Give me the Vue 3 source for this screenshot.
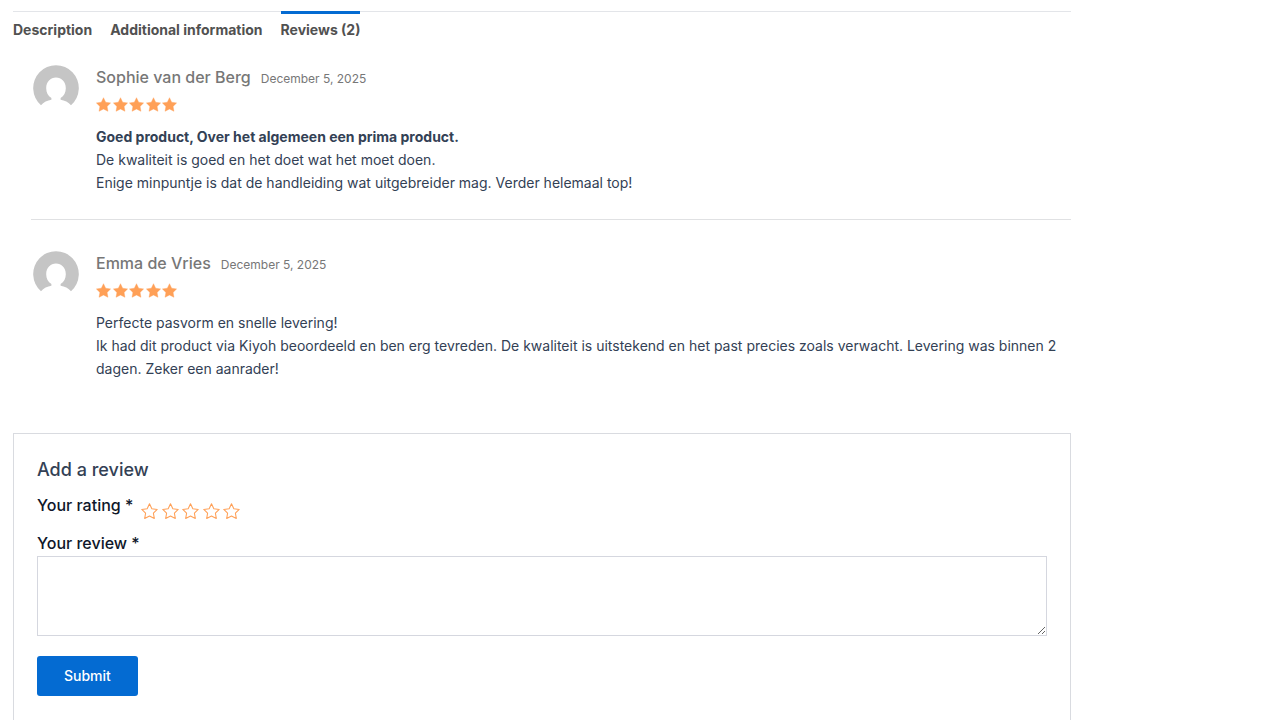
<script setup>
import { ref } from 'vue'

const tabs = [
  { id: 'description', label: 'Description' },
  { id: 'additional', label: 'Additional information' },
  { id: 'reviews', label: 'Reviews (2)' },
]
const activeTab = ref('reviews')
const rating = ref(0)
const comment = ref('')

const starPath =
  'M12 1.100L15.300 8L22.900 9.050L17.500 14.400L18.800 21.900L12 18.400L5.200 21.900L6.500 14.400L1.100 9.050L8.700 8Z'

const reviews = [
  {
    author: 'Sophie van der Berg',
    date: 'December 5, 2025',
    title: 'Goed product, Over het algemeen een prima product.',
    lines: [
      'De kwaliteit is goed en het doet wat het moet doen.',
      'Enige minpuntje is dat de handleiding wat uitgebreider mag. Verder helemaal top!',
    ],
  },
  {
    author: 'Emma de Vries',
    date: 'December 5, 2025',
    title: '',
    lines: [
      'Perfecte pasvorm en snelle levering!',
      'Ik had dit product via Kiyoh beoordeeld en ben erg tevreden. De kwaliteit is uitstekend en het past precies zoals verwacht. Levering was binnen 2 dagen. Zeker een aanrader!',
    ],
  },
]
</script>

<template>
  <main class="product-tabs">
    <nav class="tabs">
      <a
        v-for="tab in tabs"
        :key="tab.id"
        :href="'#' + tab.id"
        class="tab"
        :class="{ active: activeTab === tab.id }"
        @click.prevent="activeTab = tab.id"
      >{{ tab.label }}</a>
    </nav>

    <section class="reviews">
      <article v-for="review in reviews" :key="review.author" class="review">
        <svg class="avatar" viewBox="0 0 46 46" aria-hidden="true">
          <path
            fill="#c5c5c5"
            d="M8 40.200A22.800 22.800 0 1 1 38 40.200C35.600 37.200 31.500 35.400 27.600 34.800V33C31 31 32.800 27.600 32.800 23.300C32.800 16.800 28.500 12.600 23 12.600S13.200 16.800 13.200 23.300C13.200 27.600 15 31 18.400 33V34.800C14.500 35.400 10.400 37.200 8 40.200Z"
          />
        </svg>
        <div class="body">
          <header class="meta">
            <span class="author">{{ review.author }}</span>
            <time class="date" datetime="2025-12-05">{{ review.date }}</time>
          </header>
          <div class="stars" role="img" aria-label="Rated 5 out of 5">
            <svg v-for="n in 5" :key="n" viewBox="0.5 0 23 23"><path :d="starPath" fill="#ffa057" stroke="#ffa057" stroke-width="0.600" stroke-linejoin="round" /></svg>
          </div>
          <div class="text">
            <strong v-if="review.title">{{ review.title }}</strong>
            <p v-for="line in review.lines" :key="line">{{ line }}</p>
          </div>
        </div>
      </article>
    </section>

    <form class="review-form" @submit.prevent>
      <h3>Add a review</h3>
      <fieldset class="rating">
        <legend>Your rating *</legend>
        <div class="rating-stars">
          <label v-for="n in 5" :key="n">
            <input v-model="rating" type="radio" name="rating" :value="n" :aria-label="n + ' of 5 stars'" />
            <svg viewBox="0 0 24 24" aria-hidden="true">
              <path :d="starPath" :fill="n <= rating ? '#ffa057' : 'none'" stroke="#ffa057" stroke-width="1.500" stroke-linejoin="round" />
            </svg>
          </label>
        </div>
      </fieldset>
      <label class="field-label" for="comment">Your review *</label>
      <textarea id="comment" v-model="comment"></textarea>
      <button type="submit">Submit</button>
    </form>
  </main>
</template>

<style>
body {
  background: #fff;
}
</style>

<style scoped>
.product-tabs {
  padding: 11px 209px 0 13px;
  font-family: Inter, "Liberation Sans", sans-serif;
  color: #334155;
}
.tabs {
  display: flex;
  gap: 18px;
  border-top: 1px solid #e3e5e9;
}
.tab {
  margin-top: -1px;
  border-top: 3px solid transparent;
  padding: 6px 0;
  font-size: 14px;
  line-height: 20px;
  font-weight: 700;
  color: #515151;
  text-decoration: none;
}
.tab.active {
  border-top-color: #046bd2;
}
.reviews {
  margin-left: 18px;
}
.review {
  display: flex;
  gap: 17px;
  padding: 31px 8px 25px 2px;
}
.review:first-child {
  padding-top: 19px;
  border-bottom: 1px solid #e0e1e3;
}
.avatar {
  flex: none;
  width: 46px;
  height: 46px;
}
.body {
  flex: 1;
  min-width: 0;
}
.meta {
  display: flex;
  align-items: baseline;
  gap: 10px;
  line-height: 24px;
}
.author {
  font-size: 16px;
  font-weight: 500;
  color: #777;
}
.date {
  font-size: 12px;
  color: #777;
}
.stars {
  display: flex;
  justify-content: space-between;
  width: 81px;
  margin: 6px 0 13px;
}
.stars svg {
  width: 15px;
  height: 15px;
}
.text {
  font-size: 14px;
  line-height: 23px;
}
.text strong {
  display: block;
}
.text p {
  margin: 0;
}
.review-form {
  margin-top: 28px;
  border: 1px solid #d9dbe0;
  padding: 23px;
  display: flex;
  flex-direction: column;
  align-items: flex-start;
}
h3 {
  margin: 0 0 12px;
  font-size: 18px;
  font-weight: 500;
  line-height: 26px;
}
.rating {
  display: flex;
  margin: 0;
  border: 0;
  padding: 0;
}
.rating legend {
  float: left;
  padding: 0;
}
.rating legend,
.field-label {
  font-size: 16px;
  font-weight: 500;
  line-height: 20px;
  color: #0f172a;
}
.rating-stars {
  display: flex;
  justify-content: space-between;
  width: 99px;
  margin: 8px 0 13px 8px;
}
.rating-stars label {
  display: flex;
  cursor: pointer;
}
.rating-stars input {
  appearance: none;
  width: 0;
  height: 0;
  margin: 0;
}
.rating-stars svg {
  width: 17px;
  height: 17px;
}
textarea {
  box-sizing: border-box;
  width: 100%;
  height: 80px;
  margin: 3px 0 20px;
  border: 1px solid #d5d7df;
  border-radius: 0;
  padding: 12px;
  font: 14px/20px Inter, sans-serif;
  resize: vertical;
}
button {
  margin-bottom: 24px;
  border: 0;
  border-radius: 3px;
  padding: 10px 27px;
  background: #046bd2;
  color: #fff;
  font: 500 14px/20px Inter, sans-serif;
}
@media (max-width: 900px) {
  .product-tabs {
    padding-right: 13px;
  }
}
</style>
